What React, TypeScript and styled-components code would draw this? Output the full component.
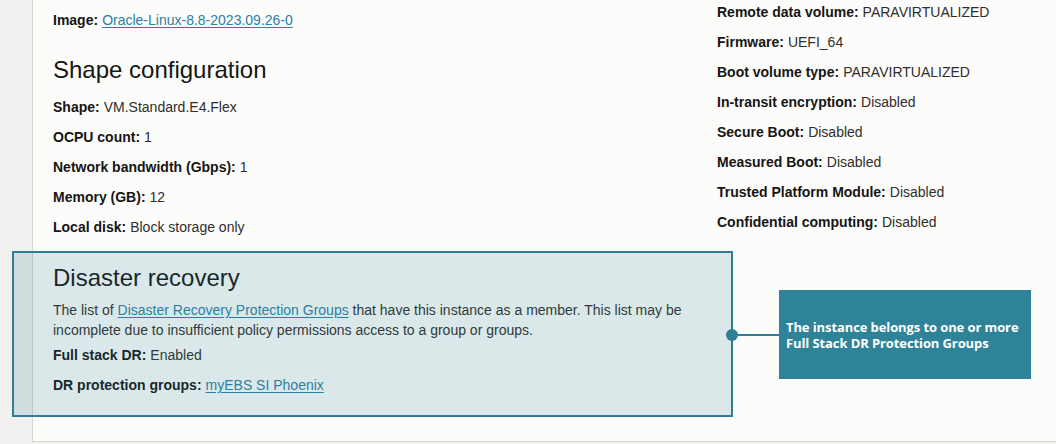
import React from "react"
import styled, { createGlobalStyle } from "styled-components"

const GlobalStyle = createGlobalStyle`
    html, body {
        margin: 0;
        padding: 0;
        background: #f1f0ee;
        overflow: hidden;
    }
    body {
        font-family: "Liberation Sans", Arial, sans-serif;
        color: #161513;
    }
`

const Page = styled.div`
    position: relative;
    width: 1056px;
    height: 444px;
    background: #f1f0ee;
`

const Panel = styled.div`
    margin-left: 32px;
    height: 442px;
    box-sizing: border-box;
    background: #fcfcfb;
    border-left: 1px solid #d8d6d2;
    border-bottom: 1px solid #d8d6d2;
    padding-left: 20px;
    font-size: 14px;
`

const Columns = styled.div`
    display: grid;
    grid-template-columns: 664px 1fr;
    align-items: start;
`

const Column = styled.div<{ offset: number }>`
    display: flex;
    flex-direction: column;
    margin-top: ${(props) => props.offset}px;
`

const Row = styled.div`
    height: 30px;
    display: flex;
    align-items: center;
    white-space: nowrap;
    color: #312d2a;
`

const Label = styled.b`
    font-weight: 700;
    color: #161513;
    margin-right: 4px;
`

const Link = styled.a`
    color: #2f7ea3;
    text-decoration: underline;
    text-underline-offset: 2px;
`

const Heading = styled.h2<{ gap: number }>`
    margin: ${(props) => props.gap}px 0 0;
    font-size: 24px;
    font-weight: 400;
    line-height: 30px;
    color: #161513;
`

const Section = styled.div`
    margin-top: 21px;
`

const Paragraph = styled.p`
    margin: 7px 0 0;
    max-width: 660px;
    line-height: 20px;
    color: #312d2a;
`

const Highlight = styled.div`
    position: absolute;
    left: 12px;
    top: 251px;
    width: 721px;
    height: 166px;
    box-sizing: border-box;
    border: 2px solid #2e7f94;
    background: rgba(46, 131, 152, 0.16);
`

const Connector = styled.div`
    position: absolute;
    left: 726px;
    top: 329px;
    display: flex;
    align-items: center;
`

const Dot = styled.span`
    width: 12px;
    height: 12px;
    border-radius: 50%;
    background: #2e7f94;
`

const Line = styled.span`
    width: 42px;
    height: 2px;
    background: #2e7f94;
`

const Callout = styled.div`
    position: absolute;
    left: 779px;
    top: 290px;
    width: 252px;
    height: 89px;
    box-sizing: border-box;
    padding: 0 6px 0 7px;
    display: flex;
    align-items: center;
    background: #2f8398;
    color: #ffffff;
    font-family: "Open Sans", "Noto Sans", sans-serif;
    font-weight: 700;
    font-size: 13px;
    line-height: 16px;
    letter-spacing: -0.1px;
`

const shapeRows = [
    ["Shape:", "VM.Standard.E4.Flex"],
    ["OCPU count:", "1"],
    ["Network bandwidth (Gbps):", "1"],
    ["Memory (GB):", "12"],
    ["Local disk:", "Block storage only"],
]

const launchRows = [
    ["Remote data volume:", "PARAVIRTUALIZED"],
    ["Firmware:", "UEFI_64"],
    ["Boot volume type:", "PARAVIRTUALIZED"],
    ["In-transit encryption:", "Disabled"],
    ["Secure Boot:", "Disabled"],
    ["Measured Boot:", "Disabled"],
    ["Trusted Platform Module:", "Disabled"],
    ["Confidential computing:", "Disabled"],
]

const App = () => {
    return (
        <Page>
            <GlobalStyle />
            <Panel>
                <Columns>
                    <Column offset={5}>
                        <Row>
                            <Label>Image:</Label>
                            <Link href="#">Oracle-Linux-8.8-2023.09.26-0</Link>
                        </Row>
                        <Heading gap={20}>Shape configuration</Heading>
                        <div style={{ height: 7 }} />
                        {shapeRows.map(([label, value]) => (
                            <Row key={label}>
                                <Label>{label}</Label>
                                {value}
                            </Row>
                        ))}
                    </Column>
                    <Column offset={-3}>
                        {launchRows.map(([label, value]) => (
                            <Row key={label}>
                                <Label>{label}</Label>
                                {value}
                            </Row>
                        ))}
                    </Column>
                </Columns>
                <Section>
                    <Heading gap={0}>Disaster recovery</Heading>
                    <Paragraph>
                        The list of <Link href="#">Disaster Recovery Protection Groups</Link> that have this
                        instance as a member. This list may be incomplete due to insufficient policy
                        permissions access to a group or groups.
                    </Paragraph>
                    <Row>
                        <Label>Full stack DR:</Label>
                        Enabled
                    </Row>
                    <Row>
                        <Label>DR protection groups:</Label>
                        <Link href="#">myEBS SI Phoenix</Link>
                    </Row>
                </Section>
            </Panel>
            <Highlight />
            <Connector>
                <Dot />
                <Line />
            </Connector>
            <Callout>The instance belongs to one or more Full Stack DR Protection Groups</Callout>
        </Page>
    )
}

export default App
